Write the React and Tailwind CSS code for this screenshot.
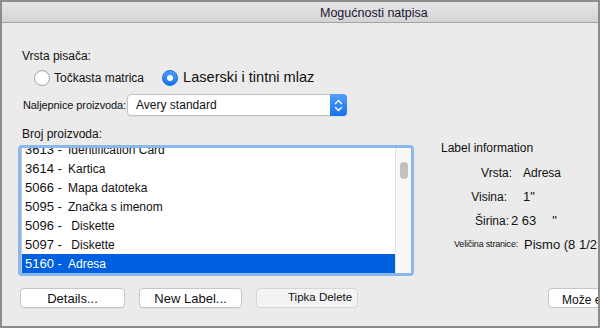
import React from 'react'

const rows = [
    { num: '3613', name: 'Identification Card' },
    { num: '3614', name: 'Kartica' },
    { num: '5066', name: 'Mapa datoteka' },
    { num: '5095', name: 'Značka s imenom' },
    { num: '5096', name: ' Diskette' },
    { num: '5097', name: ' Diskette' },
    { num: '5160', name: 'Adresa', selected: true },
]

const Radio = ({ checked }) =>
    checked ? (
        <span className="w-[16px] h-[16px] rounded-full bg-gradient-to-b from-[#4a9cf7] to-[#1772ec] border border-[#1f6fd8] flex items-center justify-center">
            <span className="w-[6px] h-[6px] rounded-full bg-white"></span>
        </span>
    ) : (
        <span className="w-[16px] h-[16px] rounded-full bg-white border border-[#a9a9a9] shadow-[inset_0_1px_1px_rgba(0,0,0,0.08)]"></span>
    )

const App = () => {
    return (
        <div className="w-[600px] h-[328px] overflow-hidden bg-[#ebebeb] border-2 border-[#8c8c8c] font-['Liberation_Sans',Arial,sans-serif] text-[#111] flex flex-col">
            {/* Title bar */}
            <div className="h-[21px] shrink-0 bg-gradient-to-b from-[#e8e5e8] to-[#d4d3d4] border-b border-[#a3a3a3] flex items-center pl-[318px]">
                <span className="text-[12.5px] text-[#1b1530] leading-none mt-[2px]">Mogućnosti natpisa</span>
            </div>

            <div className="flex flex-col pl-[16px]">
                <div className="ml-[4px] mt-[25px] h-[16px] leading-[16px] text-[12px]">Vrsta pisača:</div>

                {/* Printer type */}
                <div className="ml-[16px] mt-[6px] h-[16px] flex items-center">
                    <Radio />
                    <span className="ml-[4px] text-[12px]">Točkasta matrica</span>
                    <span className="ml-[18px]"><Radio checked /></span>
                    <span className="ml-[5px] text-[14.6px]">Laserski i tintni mlaz</span>
                </div>

                {/* Label products */}
                <div className="mt-[8px] h-[22px] flex items-center">
                    <span className="ml-[5px] text-[11px] tracking-[-0.1px]">Naljepnice proizvoda:</span>
                    <div className="ml-[1px] w-[220px] h-[22px] bg-white border border-[#c2c2c2] rounded-[4px] flex items-center justify-between shadow-[0_1px_1px_rgba(0,0,0,0.06)]">
                        <span className="ml-[8px] text-[12px]">Avery standard</span>
                        <span className="w-[17px] h-[22px] -mr-px rounded-r-[4px] bg-gradient-to-b from-[#4ea0f8] to-[#1670ec] flex items-center justify-center">
                            <svg width="9" height="13" viewBox="0 0 9 13" fill="none" stroke="white" strokeWidth="1.4" strokeLinecap="round" strokeLinejoin="round">
                                <path d="M1.5 4.5 L4.5 1.5 L7.5 4.5" />
                                <path d="M1.5 8.5 L4.5 11.5 L7.5 8.5" />
                            </svg>
                        </span>
                    </div>
                </div>

                <div className="flex">
                    {/* Product list */}
                    <div className="flex flex-col shrink-0">
                        <div className="ml-[4px] mt-[10px] h-[16px] leading-[16px] text-[12px]">Broj proizvoda:</div>
                        <div className="mt-[3px] w-[396px] h-[131px] rounded-[4px] border-[3px] border-[#88b8ec] bg-white flex overflow-hidden">
                            <div className="flex-1 overflow-hidden border-l border-[#c9c9c9]">
                                <div className="-mt-[8px] flex flex-col">
                                    {rows.map((r) => (
                                        <div
                                            key={r.num}
                                            className={`h-[19px] flex items-center pl-[3px] whitespace-pre ${r.selected ? 'bg-[#0060df] text-white' : ''}`}
                                        >
                                            <span className="text-[13px] w-[35px]">{r.num} -</span>
                                            <span className="text-[12px] ml-[8px]">{r.name}</span>
                                        </div>
                                    ))}
                                </div>
                            </div>
                            <div className="w-[16px] bg-[#f8f8f8] border-l border-[#e3e3e3] flex justify-center">
                                <div className="mt-[14px] w-[8px] h-[17px] rounded-full bg-[#c1c1c1]"></div>
                            </div>
                        </div>
                    </div>

                    {/* Label information */}
                    <div className="ml-[27px] mt-[24px] flex flex-col text-[12px] shrink-0">
                        <div className="h-[16px] leading-[16px]">Label information</div>
                        <div className="mt-[5px] h-[24px] flex items-center">
                            <span className="w-[71px] text-right">Vrsta:</span>
                            <span className="ml-[11px]">Adresa</span>
                        </div>
                        <div className="h-[24px] flex items-center">
                            <span className="w-[66px] text-right">Visina:</span>
                            <span className="ml-[16px] text-[13px] font-medium">1"</span>
                        </div>
                        <div className="h-[24px] flex items-center">
                            <span className="ml-[34px]">Širina:</span>
                            <span className="ml-[2px] text-[13px]">2 63</span>
                            <span className="ml-[16px] text-[13px]">"</span>
                        </div>
                        <div className="h-[24px] flex items-center">
                            <span className="w-[77px] text-right text-[9px] tracking-[-0.2px]">Veličina stranice:</span>
                            <span className="ml-[6px] text-[13px] whitespace-nowrap">Pismo (8 1/2</span>
                        </div>
                    </div>
                </div>

                {/* Buttons */}
                <div className="mt-[12px] flex items-center text-[13px]">
                    <button className="shrink-0 ml-[2px] w-[105px] h-[20px] bg-white border border-[#c6c6c6] rounded-[4px] shadow-[0_1px_1px_rgba(0,0,0,0.05)] leading-none">Details...</button>
                    <button className="shrink-0 ml-[14px] w-[103px] h-[20px] bg-white border border-[#c6c6c6] rounded-[4px] shadow-[0_1px_1px_rgba(0,0,0,0.05)] leading-none">New Label...</button>
                    <button className="shrink-0 ml-[14px] w-[102px] h-[20px] bg-[#f3f3f3] border border-[#d6d6d6] rounded-[4px] text-[11.5px] text-left pl-[31px] leading-none whitespace-nowrap">Tipka Delete</button>
                    <button className="shrink-0 ml-[190px] w-[70px] h-[20px] bg-white border border-[#c6c6c6] rounded-[4px] text-[12px] text-left pl-[13px] pt-[3px] leading-none whitespace-nowrap">Može e</button>
                </div>
            </div>
        </div>
    )
}

export default App
